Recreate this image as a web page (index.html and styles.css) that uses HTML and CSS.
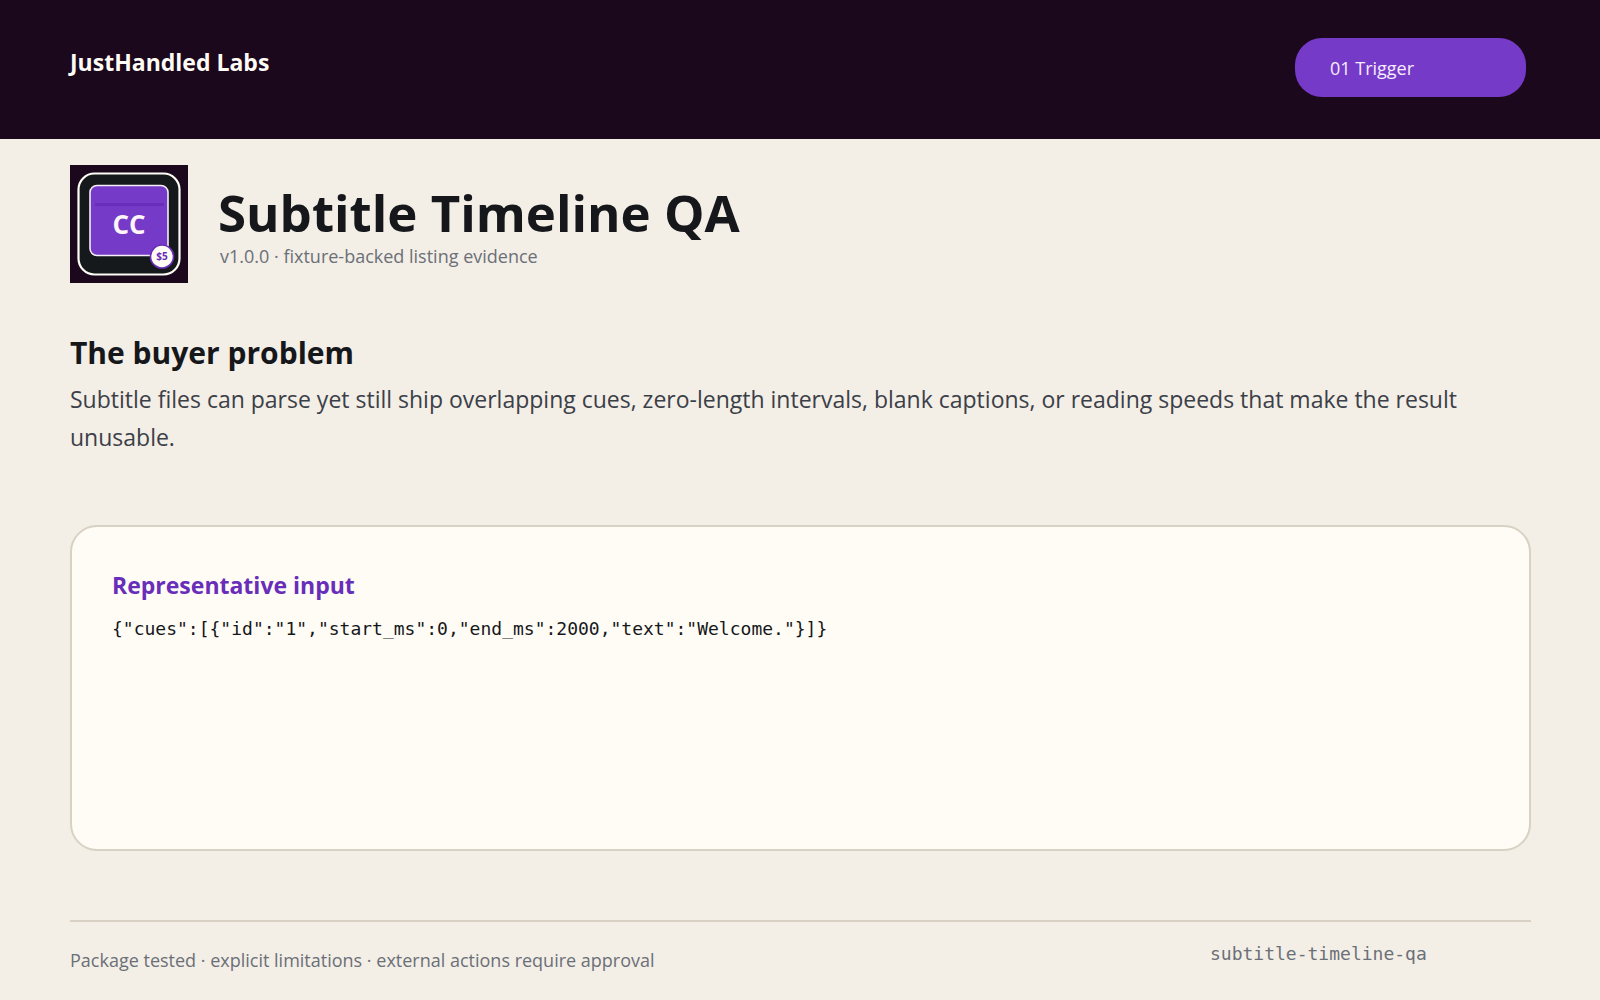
FILE: index.html
```html
<!DOCTYPE html>
<html lang="en">
<head>
<meta charset="utf-8">
<meta name="viewport" content="width=device-width, initial-scale=1">
<title>Subtitle Timeline QA</title>
<link rel="stylesheet" href="styles.css">
</head>
<body>
<header class="topbar">
  <div class="brand">JustHandled Labs</div>
  <div class="step">01 Trigger</div>
</header>
<main class="content">
  <section class="product">
    <svg class="logo" viewBox="0 0 118 118" role="img" aria-label="Subtitle Timeline QA logo">
      <rect width="118" height="118" fill="#1b081d"/>
      <rect x="8.5" y="8.5" width="101" height="101" rx="16" fill="#15191c" stroke="#fffcf5" stroke-width="2.2"/>
      <rect x="20" y="20.500" width="78" height="70" rx="7" fill="#763ac8" stroke="#f6edf6" stroke-width="1.600"/>
      <rect x="25" y="38" width="69" height="3" fill="#682eb9"/>
      <text class="logo-mark" x="59" y="69" text-anchor="middle">CC</text>
      <circle cx="92" cy="91.500" r="11.500" fill="#fffcf5" stroke="#682eb9" stroke-width="1.600"/>
      <text class="logo-price" x="92" y="95" text-anchor="middle">$5</text>
    </svg>
    <div class="product-text">
      <h1 class="title">Subtitle Timeline QA</h1>
      <p class="version">v1.0.0 · fixture-backed listing evidence</p>
    </div>
  </section>
  <section class="problem">
    <h2 class="heading">The buyer problem</h2>
    <p class="lead">Subtitle files can parse yet still ship overlapping cues, zero-length intervals, blank captions, or reading speeds that make the result unusable.</p>
  </section>
  <section class="card">
    <h3 class="card-title">Representative input</h3>
    <pre class="code"><code>{"cues":[{"id":"1","start_ms":0,"end_ms":2000,"text":"Welcome."}]}</code></pre>
  </section>
</main>
<footer class="footer">
  <p class="note">Package tested · explicit limitations · external actions require approval</p>
  <p class="slug">subtitle-timeline-qa</p>
</footer>
</body>
</html>
```
FILE: styles.css
```css
* {
  box-sizing: border-box;
}

body {
  margin: 0;
  min-height: 100vh;
  display: flex;
  flex-direction: column;
  background: #f3eee6;
  color: #15171b;
  font-family: "Open Sans", "Noto Sans", sans-serif;
}

h1, h2, h3, p, pre {
  margin: 0;
}

.topbar {
  display: flex;
  justify-content: space-between;
  align-items: flex-start;
  padding: 38px 74px 42px 70px;
  background: #1b081d;
}

.brand {
  padding-top: 8px;
  color: #fffcf5;
  font-size: 23px;
  font-weight: 700;
  line-height: 32px;
}

.step {
  width: 231px;
  padding: 16px 35px 15px;
  border-radius: 27px;
  background: #763ac8;
  color: #f6edff;
  font-size: 18px;
  line-height: 28px;
}

.content {
  flex: 1;
  display: flex;
  flex-direction: column;
  padding: 26px 69px 69px 70px;
}

.product {
  display: flex;
  gap: 30px;
}

.logo {
  flex: none;
  width: 118px;
  height: 118px;
}

.logo-mark {
  fill: #fdf5f8;
  font-size: 26px;
  font-weight: 700;
}

.logo-price {
  fill: #682eb9;
  font-size: 10px;
  font-weight: 700;
}

.product-text {
  padding-top: 15px;
}

.title {
  font-size: 51px;
  font-weight: 700;
  line-height: 64px;
}

.version {
  padding-left: 2px;
  color: #6b7078;
  font-size: 18px;
  line-height: 24px;
}

.problem {
  margin-top: 49px;
}

.heading {
  font-size: 30px;
  font-weight: 700;
  line-height: 42px;
}

.lead {
  margin-top: 6px;
  color: #3b4048;
  font-size: 23px;
  line-height: 38px;
}

.card {
  flex: 1;
  margin-top: 69px;
  padding: 42px 40px;
  border: 2px solid #d8d1c4;
  border-radius: 27px;
  background: #fffcf5;
}

.card-title {
  color: #682eb9;
  font-size: 23px;
  font-weight: 700;
  line-height: 32px;
}

.code {
  margin-top: 16px;
  font-size: 18px;
  line-height: 24px;
}

.code code,
.slug {
  font-family: "DejaVu Sans Mono", "Liberation Mono", monospace;
}

.footer {
  display: flex;
  justify-content: space-between;
  align-items: flex-start;
  margin: 0 69px 0 70px;
  padding: 20px 0 28px;
  border-top: 2px solid #d8d1c4;
  color: #6b7078;
  font-size: 18px;
  line-height: 24px;
}

.note {
  padding-top: 6px;
}

.slug {
  width: 321px;
}
```
